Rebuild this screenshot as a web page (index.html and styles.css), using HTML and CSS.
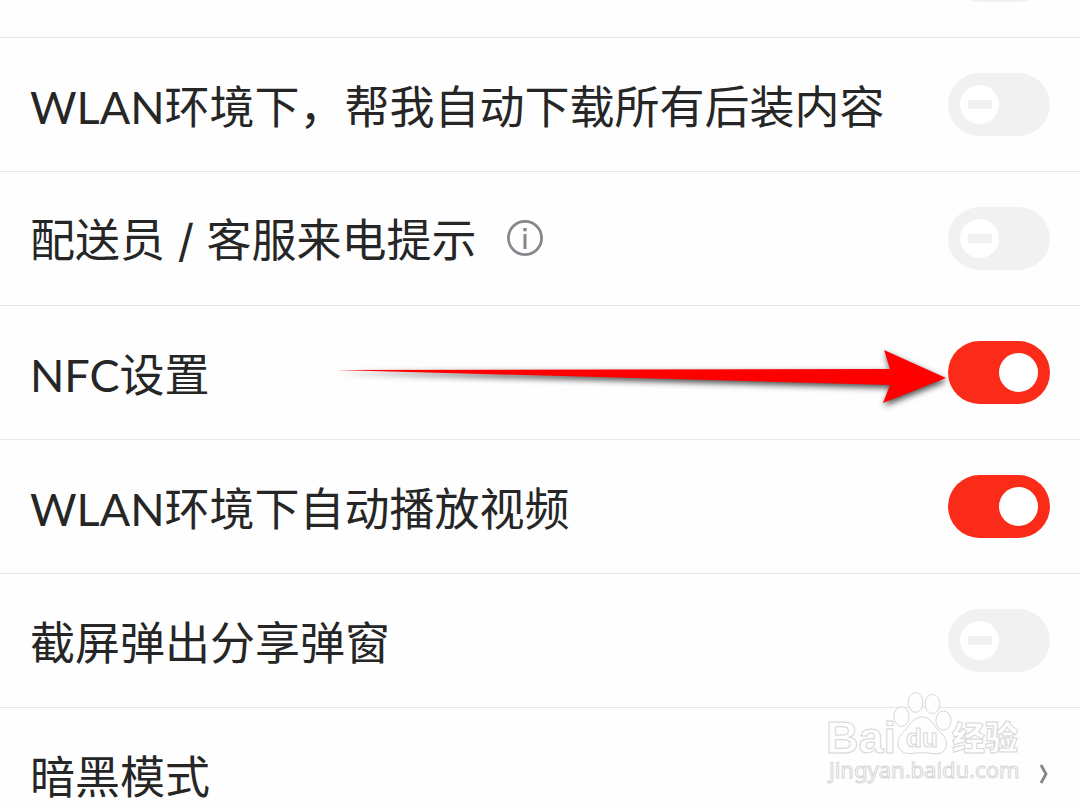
FILE: index.html
```
<!DOCTYPE html>
<html lang="zh-CN">
<head>
<meta charset="utf-8">
<meta name="viewport" content="width=device-width, initial-scale=1">
<title>设置</title>
<link rel="stylesheet" href="styles.css">
</head>
<body>
<main class="screen">
  <ul class="settings">
    <li class="row row-end"><input class="switch" type="checkbox" role="switch" aria-label="开关"></li>
    <li class="row">
      <label class="label" for="s-download">WLAN环境下，帮我自动下载所有后装内容</label>
      <input class="switch" type="checkbox" role="switch" id="s-download">
    </li>
    <li class="row">
      <div class="label-group">
        <label class="label" for="s-call">配送员<span class="slash"> / </span>客服来电提示</label>
        <button class="info" type="button" aria-label="说明">
          <svg viewBox="0 0 38 38" width="38" height="38" fill="none" stroke="#85878c" aria-hidden="true">
            <circle cx="19" cy="18" r="16.6" stroke-width="2.8"/>
            <path d="M19 14v15" stroke-width="3"/>
            <path d="M19 8v3.2" stroke-width="3.4"/>
          </svg>
        </button>
      </div>
      <input class="switch" type="checkbox" role="switch" id="s-call">
    </li>
    <li class="row">
      <label class="label" for="s-nfc">NFC设置</label>
      <input class="switch" type="checkbox" role="switch" id="s-nfc" checked>
      <svg class="arrow" viewBox="0 0 626 80" width="626" height="80" aria-hidden="true">
        <path d="M6 30L560 29L554 10L616 38L553 63L560 45Z" fill="#fe0000"/>
      </svg>
    </li>
    <li class="row">
      <label class="label" for="s-video">WLAN环境下自动播放视频</label>
      <input class="switch" type="checkbox" role="switch" id="s-video" checked>
    </li>
    <li class="row">
      <label class="label" for="s-share">截屏弹出分享弹窗</label>
      <input class="switch" type="checkbox" role="switch" id="s-share">
    </li>
    <li class="row">
      <a class="link" href="#dark">
        <span class="label">暗黑模式</span>
        <svg class="chevron" viewBox="0 0 12 22" width="12" height="22" fill="none" stroke="#858585" stroke-width="2.8" aria-hidden="true"><path d="M3 1L8 10L3 19"/></svg>
      </a>
    </li>
  </ul>
  <svg class="watermark" viewBox="0 0 210 100" width="210" height="100" role="img" aria-label="Baidu 经验">
    <g class="mark">
      <text x="2" y="62" class="mark-name">Bai</text>
      <ellipse cx="77.5" cy="25.5" rx="7.6" ry="9.8"/>
      <ellipse cx="91.5" cy="11.5" rx="7.4" ry="9.8"/>
      <ellipse cx="108.5" cy="13" rx="7.4" ry="9.6"/>
      <ellipse cx="119.5" cy="29.5" rx="7.6" ry="9.6"/>
      <path d="M98 26C90 26 86 33 82 38C78 43 73 46 74 54C76 61 81 63 87 62.500C94 61.500 102 61.500 108 62.500C117 64 123 60 122.500 52C122 45 117 43 113 38C109 32 106 26 98 26Z"/>
      <text x="82" y="56" class="mark-du">du</text>
      <text x="128" y="59" class="mark-cn">经验</text>
      <text x="5" y="87" class="mark-url">jingyan.baidu.com</text>
    </g>
  </svg>
</main>
</body>
</html>
```
FILE: styles.css
```
* { box-sizing: border-box; }

body {
  margin: 0;
  background: #fefefe;
  color: #262626;
  font-family: Lato, "Noto Sans CJK SC", sans-serif;
}

.screen {
  position: relative;
  height: 100vh;
  overflow: hidden;
}

/* The list is scrolled part of a row down. */
.settings {
  list-style: none;
  margin: -96px 0 0;
  padding: 0;
}

.row {
  position: relative;
  display: flex;
  align-items: center;
  justify-content: space-between;
  height: 134px;
  padding: 0 30px;
  border-bottom: 1px solid #e6e6e6;
}

.row-end { justify-content: flex-end; }

.label {
  padding-top: 4px;
  font-size: 45px;
  line-height: 64px;
  white-space: nowrap;
}

.slash { font-family: Inter, sans-serif; }

.label-group {
  display: flex;
  align-items: center;
  gap: 29px;
}

.info {
  display: flex;
  padding: 0;
  border: 0;
  background: none;
}

.switch {
  appearance: none;
  flex: none;
  display: flex;
  align-items: center;
  width: 102px;
  height: 63px;
  margin: 0;
  padding: 0 12px;
  border-radius: 32px;
  background: #f1f1f1;
}

.switch::before {
  content: "";
  width: 39px;
  height: 39px;
  border-radius: 50%;
  background: linear-gradient(#f1f1f1, #f1f1f1) center / 24px 9px no-repeat #fff;
}

.switch:checked {
  justify-content: flex-end;
  background: #fa2c19;
}

.switch:checked::before { background: #fff; }

.link {
  display: flex;
  flex: 1;
  align-items: center;
  justify-content: space-between;
  color: inherit;
  text-decoration: none;
}

/* Pointer drawn over the row, ending at the switch. */
.arrow {
  position: absolute;
  right: 124px;
  top: 34px;
  pointer-events: none;
  filter: drop-shadow(1px 3px 3px rgba(0, 0, 0, 0.7));
}

.watermark {
  position: absolute;
  right: 46px;
  bottom: 17px;
  pointer-events: none;
}

.mark {
  fill: #fefefe;
  stroke: #d6d6d6;
  stroke-width: 1px;
}

.mark text { font-family: "Liberation Sans", sans-serif; }

.mark .mark-name {
  font-size: 45px;
  font-weight: 700;
}

.mark .mark-du {
  font-size: 26px;
  font-weight: 700;
}

.mark .mark-cn {
  font-family: "Noto Sans CJK SC", sans-serif;
  font-size: 33px;
  font-weight: 900;
}

.mark .mark-url {
  font-family: "Noto Sans", sans-serif;
  font-size: 22px;
}
```
